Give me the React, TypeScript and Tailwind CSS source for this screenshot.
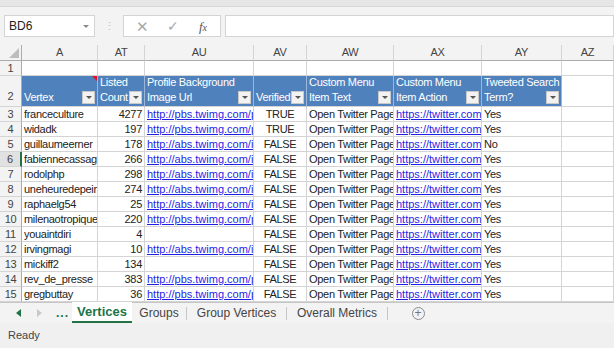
type Row = {
  n: number;
  vertex: string;
  count: number;
  url: string;
  verified: string;
  term: string;
};

const PBS = 'http://pbs.twimg.com/profile_background_images/';
const ABS = 'http://abs.twimg.com/images/themes/theme1/bg.png';

const rows: Row[] = [
  { n: 3, vertex: 'franceculture', count: 4277, url: PBS, verified: 'TRUE', term: 'Yes' },
  { n: 4, vertex: 'widadk', count: 197, url: PBS, verified: 'TRUE', term: 'Yes' },
  { n: 5, vertex: 'guillaumeerner', count: 178, url: ABS, verified: 'FALSE', term: 'No' },
  { n: 6, vertex: 'fabiennecassagne', count: 266, url: ABS, verified: 'FALSE', term: 'Yes' },
  { n: 7, vertex: 'rodolphp', count: 298, url: ABS, verified: 'FALSE', term: 'Yes' },
  { n: 8, vertex: 'uneheuredepeine', count: 274, url: ABS, verified: 'FALSE', term: 'Yes' },
  { n: 9, vertex: 'raphaelg54', count: 25, url: ABS, verified: 'FALSE', term: 'Yes' },
  { n: 10, vertex: 'milenaotropiques', count: 220, url: PBS, verified: 'FALSE', term: 'Yes' },
  { n: 11, vertex: 'youaintdiri', count: 4, url: '', verified: 'FALSE', term: 'Yes' },
  { n: 12, vertex: 'irvingmagi', count: 10, url: ABS, verified: 'FALSE', term: 'Yes' },
  { n: 13, vertex: 'mickiff2', count: 134, url: '', verified: 'FALSE', term: 'Yes' },
  { n: 14, vertex: 'rev_de_presse', count: 383, url: PBS, verified: 'FALSE', term: 'Yes' },
  { n: 15, vertex: 'gregbuttay', count: 36, url: PBS, verified: 'FALSE', term: 'Yes' },
];

// column widths: row header, A, AT, AU, AV, AW, AX, AY, AZ
const W = {
  rh: 'w-[22px]',
  a: 'w-[76px]',
  at: 'w-[47px]',
  au: 'w-[109px]',
  av: 'w-[53px]',
  aw: 'w-[87px]',
  ax: 'w-[88px]',
  ay: 'w-[80px]',
  az: 'w-[52px]',
};

const cell = 'shrink-0 h-full border-r border-b border-[#d4d4d4] overflow-hidden whitespace-nowrap';

function FilterBtn() {
  return (
    <span className="absolute right-[2px] bottom-[2px] w-[13px] h-[13px] bg-[#f2f2f2] border border-[#c8c8c8] flex items-center justify-center">
      <span className="block w-0 h-0 border-l-[3px] border-r-[3px] border-t-[3px] border-l-transparent border-r-transparent border-t-[#555]" />
    </span>
  );
}

function HeadCell({ w, lines }: { w: string; lines: string[] }) {
  return (
    <div className={`${w} shrink-0 h-full relative bg-[#4f81bd] border-r border-[#9db5d8] border-b border-b-[#d4d4d4] text-white text-[11px] leading-[15px] flex flex-col justify-end pl-[2px] pb-[1px]`}>
      {lines.map((l) => (
        <div key={l} className="whitespace-nowrap">{l}</div>
      ))}
      <FilterBtn />
    </div>
  );
}

export default function App() {
  return (
    <div className="w-[614px] h-[348px] overflow-hidden bg-[#f3f3f3] flex flex-col text-[#222] font-['Liberation_Sans',Arial,sans-serif]">
      {/* ribbon edge */}
      <div className="h-[7px] shrink-0 bg-[#e6e6e6] border-b border-[#d6d6d6]" />

      {/* formula bar */}
      <div className="h-[38px] shrink-0 flex items-start pt-[8px]">
        <div className="ml-[4px] w-[91px] h-[22px] bg-white border border-[#d4d4d4] flex items-center pl-[4px] pr-[5px] text-[12px]">
          <span className="flex-1">BD6</span>
          <span className="block w-0 h-0 border-l-[3px] border-r-[3px] border-t-[3px] border-l-transparent border-r-transparent border-t-[#8a8a8a]" />
        </div>
        <div className="w-[28px] h-[22px] flex items-center justify-center text-[#c0c0c0] text-[11px] leading-none">⋮</div>
        <div className="w-[98px] h-[22px] bg-white border border-[#d4d4d4] flex items-center">
          <span className="w-[36px] text-center text-[#a8a8a8] text-[15px] leading-none">✕</span>
          <span className="w-[26px] text-center text-[#a8a8a8] text-[14px] leading-none">✓</span>
          <span className="w-[34px] text-center text-[#555] text-[13px] italic leading-none font-['Liberation_Serif',serif]">
            f<span className="text-[10px]">x</span>
          </span>
        </div>
        <div className="ml-[4px] flex-1 h-[22px] bg-white border border-[#d4d4d4]" />
      </div>

      <div className="tracking-[-0.3px] flex flex-col shrink-0">
        {/* column headers */}
        <div className="h-[16px] shrink-0 flex text-[11px] text-[#444] bg-[#f3f3f3]">
          <div className={`${W.rh} shrink-0 h-full border-r border-b border-[#ababab] relative`}>
            <span className="absolute right-[2px] bottom-[2px] w-0 h-0 border-l-[10px] border-b-[10px] border-l-transparent border-b-[#bdbdbd]" />
          </div>
          {[
            [W.a, 'A'],
            [W.at, 'AT'],
            [W.au, 'AU'],
            [W.av, 'AV'],
            [W.aw, 'AW'],
            [W.ax, 'AX'],
            [W.ay, 'AY'],
            [W.az, 'AZ'],
          ].map(([w, l]) => (
            <div key={l} className={`${w} shrink-0 h-full border-r border-b border-r-[#d4d4d4] border-b-[#ababab] flex items-center justify-center`}>
              {l}
            </div>
          ))}
        </div>

        {/* row 1 */}
        <div className="h-[15px] shrink-0 flex text-[11px] bg-white">
          <div className={`${W.rh} shrink-0 h-full bg-[#f3f3f3] border-r border-b border-r-[#ababab] border-b-[#d4d4d4] text-[#444] flex items-center justify-center`}>1</div>
          {[W.a, W.at, W.au, W.av, W.aw, W.ax, W.ay, W.az].map((w, i) => (
            <div key={i} className={`${w} ${cell}`} />
          ))}
        </div>

        {/* row 2: table headers */}
        <div className="h-[31px] shrink-0 flex bg-white">
          <div className={`${W.rh} shrink-0 h-full bg-[#f3f3f3] border-r border-b border-r-[#ababab] border-b-[#d4d4d4] text-[#444] text-[11px] flex items-end justify-center pb-[2px]`}>2</div>
          <div className="relative">
            <HeadCell w={W.a} lines={['Vertex']} />
            <span className="absolute right-[1px] top-0 w-0 h-0 border-l-[5px] border-b-[5px] border-l-transparent border-b-transparent border-r-0" style={{ borderTop: '5px solid #e81123' }} />
          </div>
          <HeadCell w={W.at} lines={['Listed', 'Count']} />
          <HeadCell w={W.au} lines={['Profile Background', 'Image Url']} />
          <HeadCell w={W.av} lines={['Verified']} />
          <HeadCell w={W.aw} lines={['Custom Menu', 'Item Text']} />
          <HeadCell w={W.ax} lines={['Custom Menu', 'Item Action']} />
          <HeadCell w={W.ay} lines={['Tweeted Search', 'Term?']} />
          <div className={`${W.az} ${cell}`} />
        </div>

        {/* data rows */}
        <div className="shrink-0 bg-white text-[11px]">
          {rows.map((r) => (
            <div key={r.n} className="h-[15px] flex leading-[14px]">
              <div
                className={`${W.rh} shrink-0 h-full border-b border-b-[#d4d4d4] flex items-center justify-center text-[#444] ${
                  r.n === 6 ? 'bg-[#e1e1e1] border-r-2 border-r-[#217346]' : 'bg-[#f3f3f3] border-r border-r-[#ababab]'
                }`}
              >
                {r.n}
              </div>
              <div className={`${W.a} ${cell} pl-[2px]`}>{r.vertex}</div>
              <div className={`${W.at} ${cell} text-right pr-[2px]`}>{r.count}</div>
              <div className={`${W.au} ${cell} pl-[2px] text-[#1f1fe6] underline tracking-normal`}>{r.url}</div>
              <div className={`${W.av} ${cell} text-center`}>{r.verified}</div>
              <div className={`${W.aw} ${cell} pl-[2px]`}>Open Twitter Page for This Person</div>
              <div className={`${W.ax} ${cell} pl-[2px] text-[#1f1fe6] underline tracking-normal`}>
                https://twitter.com/{r.vertex}
              </div>
              <div className={`${W.ay} ${cell} pl-[2px]`}>{r.term}</div>
              <div className={`${W.az} ${cell}`} />
            </div>
          ))}
        </div>
      </div>

      {/* sheet tabs */}
      <div className="h-[21px] shrink-0 flex items-stretch border-t border-[#c6c6c6] bg-[#f3f3f3] text-[12px] text-[#444]">
        <div className="w-[72px] flex items-center">
          <span className="ml-[16px] block w-0 h-0 border-t-[4px] border-b-[4px] border-r-[5px] border-t-transparent border-b-transparent border-r-[#217346]" />
          <span className="ml-[16px] block w-0 h-0 border-t-[4px] border-b-[4px] border-l-[5px] border-t-transparent border-b-transparent border-l-[#c8c8c8]" />
          <span className="ml-[14px] text-[#217346] font-bold text-[12px] leading-none tracking-[1px]">...</span>
        </div>
        <div className="w-[60px] -mt-px bg-white border-b-2 border-[#217346] flex items-center justify-center font-bold text-[#217346] text-[13px]">
          Vertices
        </div>
        <div className="w-[54px] flex items-center justify-center">Groups</div>
        <div className="w-px h-[13px] self-center bg-[#c6c6c6]" />
        <div className="w-[99px] flex items-center justify-center">Group Vertices</div>
        <div className="w-px h-[13px] self-center bg-[#c6c6c6]" />
        <div className="w-[100px] flex items-center justify-center">Overall Metrics</div>
        <div className="w-px h-[13px] self-center bg-[#c6c6c6]" />
        <div className="w-[60px] flex items-center justify-center">
          <span className="w-[13px] h-[13px] rounded-full border border-[#8a8a8a] flex items-center justify-center text-[#777] text-[12px] leading-none">+</span>
        </div>
        <div className="flex-1" />
      </div>

      {/* status bar */}
      <div className="flex-1 flex items-center pl-[8px] text-[11px] text-[#444] bg-[#f0f0f0]">Ready</div>
    </div>
  );
}
